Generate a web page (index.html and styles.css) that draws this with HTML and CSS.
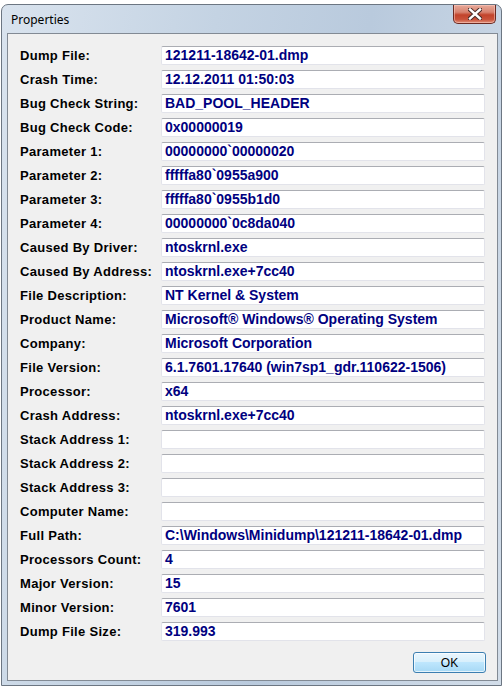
FILE: index.html
```html
<!DOCTYPE html>
<html>
  <head>
    <title>Properties</title>
    <link rel="stylesheet" href="styles.css">
  </head>
  <body>
    <div class="window">
      <div class="titlebar">
        <span class="title">Properties</span>
        <button class="close-button">
          <svg width="14" height="12" viewBox="0 0 14 12">
            <path d="M2 1.5 L12 10.5 M12 1.5 L2 10.5" stroke="#4a2a26" stroke-width="4.4" stroke-linecap="square"/>
            <path d="M2 1.5 L12 10.5 M12 1.5 L2 10.5" stroke="#ffffff" stroke-width="2.4" stroke-linecap="square"/>
          </svg>
        </button>
      </div>

      <div class="client">
        <div class="fields">
          <span class="label">Dump File:</span>
          <div class="value">121211-18642-01.dmp</div>
          <span class="label">Crash Time:</span>
          <div class="value">12.12.2011 01:50:03</div>
          <span class="label">Bug Check String:</span>
          <div class="value">BAD_POOL_HEADER</div>
          <span class="label">Bug Check Code:</span>
          <div class="value">0x00000019</div>
          <span class="label">Parameter 1:</span>
          <div class="value">00000000`00000020</div>
          <span class="label">Parameter 2:</span>
          <div class="value">fffffa80`0955a900</div>
          <span class="label">Parameter 3:</span>
          <div class="value">fffffa80`0955b1d0</div>
          <span class="label">Parameter 4:</span>
          <div class="value">00000000`0c8da040</div>
          <span class="label">Caused By Driver:</span>
          <div class="value">ntoskrnl.exe</div>
          <span class="label">Caused By Address:</span>
          <div class="value">ntoskrnl.exe+7cc40</div>
          <span class="label">File Description:</span>
          <div class="value">NT Kernel &amp; System</div>
          <span class="label">Product Name:</span>
          <div class="value">Microsoft® Windows® Operating System</div>
          <span class="label">Company:</span>
          <div class="value">Microsoft Corporation</div>
          <span class="label">File Version:</span>
          <div class="value">6.1.7601.17640 (win7sp1_gdr.110622-1506)</div>
          <span class="label">Processor:</span>
          <div class="value">x64</div>
          <span class="label">Crash Address:</span>
          <div class="value">ntoskrnl.exe+7cc40</div>
          <span class="label">Stack Address 1:</span>
          <div class="value"></div>
          <span class="label">Stack Address 2:</span>
          <div class="value"></div>
          <span class="label">Stack Address 3:</span>
          <div class="value"></div>
          <span class="label">Computer Name:</span>
          <div class="value"></div>
          <span class="label">Full Path:</span>
          <div class="value">C:\Windows\Minidump\121211-18642-01.dmp</div>
          <span class="label">Processors Count:</span>
          <div class="value">4</div>
          <span class="label">Major Version:</span>
          <div class="value">15</div>
          <span class="label">Minor Version:</span>
          <div class="value">7601</div>
          <span class="label">Dump File Size:</span>
          <div class="value">319.993</div>
        </div>

        <div class="buttons">
          <button class="ok-button">OK</button>
        </div>
      </div>
    </div>
  </body>
</html>
```

FILE: styles.css
```css
body{
  margin: 0;
  background-color: white;
}
.window{
  box-sizing: border-box;
  width: 501px;
  height: 682px;
  margin: 4px 0 0 1px;
  padding: 0 3px 4px 5px;
  border: 1px solid #6c7682;
  border-radius: 7px 7px 0 0;
  background: linear-gradient(100deg, #d9e3ee 0%, #c4d3e3 35%, #b9cadd 60%, #d2dde9 100%);
  display: flex;
  flex-direction: column;
}
.titlebar{
  height: 28px;
  display: flex;
  align-items: flex-start;
}
.title{
  margin: 6px 0 0 4px;
  font-family: "Noto Sans", sans-serif;
  font-size: 12px;
  color: black;
}
.close-button{
  margin-left: auto;
  margin-right: 2px;
  width: 43px;
  height: 19px;
  padding: 0;
  border: 1px solid #6b2a22;
  border-top: none;
  border-radius: 0 0 5px 5px;
  background: linear-gradient(#e8a99a 0%, #d7826f 40%, #c2432b 55%, #c9523a 80%, #e0907a 100%);
  box-shadow: inset 0 0 0 1px rgba(255, 210, 200, 0.5);
  display: flex;
  align-items: center;
  justify-content: center;
}
.client{
  box-sizing: border-box;
  height: 648px;
  padding: 12px 11px 0 12px;
  border: 1px solid #828a94;
  background-color: #f0f0f0;
}
.fields{
  display: grid;
  grid-template-columns: 141px 324px;
  grid-auto-rows: 19px;
  row-gap: 5px;
  align-items: center;
}
.label{
  font-family: "Liberation Sans", Arial, sans-serif;
  font-size: 13px;
  font-weight: bold;
  letter-spacing: 0.3px;
  color: black;
}
.value{
  box-sizing: border-box;
  height: 19px;
  padding: 0 0 0 3px;
  border: 1px solid #e2e3ea;
  border-top-color: #abadb3;
  border-radius: 2px;
  background-color: white;
  font-family: "Liberation Sans", Arial, sans-serif;
  font-size: 14px;
  font-weight: bold;
  line-height: 17px;
  color: #000080;
  white-space: nowrap;
  overflow: hidden;
}
.buttons{
  display: flex;
  justify-content: flex-end;
  margin-top: 11px;
}
.ok-button{
  width: 73px;
  height: 21px;
  padding: 0;
  border: 1px solid #3c7fb1;
  border-radius: 3px;
  background: linear-gradient(#eaf6fd 0%, #d9f0fc 45%, #bee6fd 50%, #a7d9f5 100%);
  box-shadow: inset 0 0 0 1px rgba(255, 255, 255, 0.7);
  font-family: "Liberation Sans", Arial, sans-serif;
  font-size: 12px;
  color: black;
}
```
